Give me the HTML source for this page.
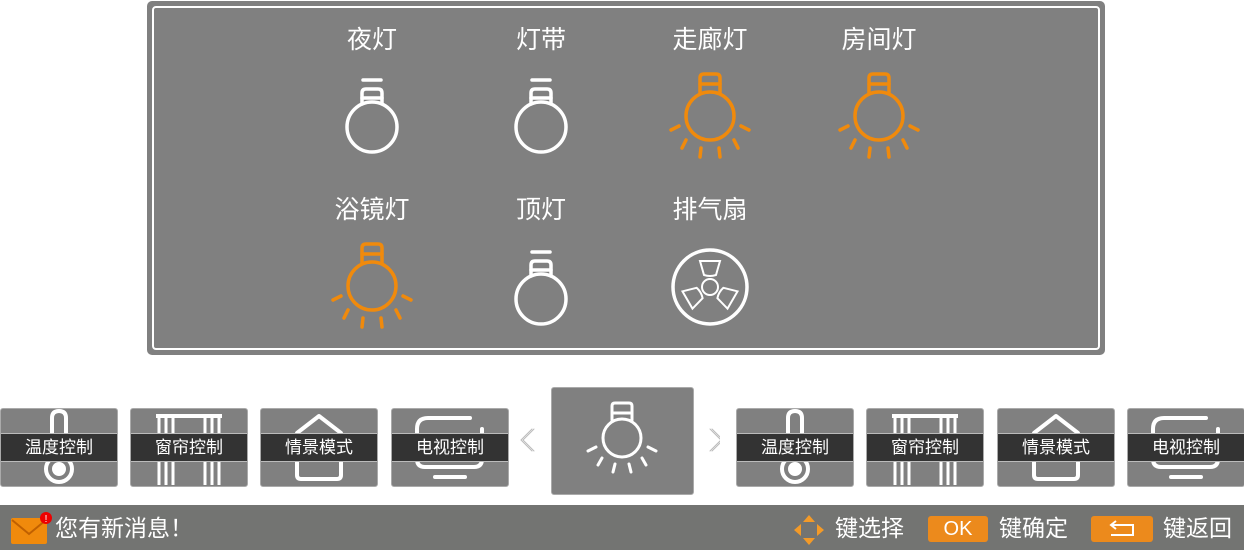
<!DOCTYPE html><html><head><meta charset="utf-8"><style>
body{margin:0;width:1244px;height:550px;background:#fff;position:relative;overflow:hidden;font-family:"Liberation Sans","Noto Sans CJK SC",sans-serif}
.panel{position:absolute;left:147px;top:1px;width:958px;height:354px;background:#808080;border-radius:5px}
.panel:after{content:"";position:absolute;left:5px;top:5px;right:5px;bottom:5px;border:2px solid #fff;border-radius:4px}
.lbl{position:absolute;color:#fff;font-size:25px;width:140px;text-align:center;line-height:30px}
.tile{position:absolute;top:408px;width:116px;height:77px;background:#808080;border:1px solid #aaa;border-radius:3px;overflow:hidden}
.band{position:absolute;left:0;right:0;top:24px;height:27px;background:#333;border-top:1px solid #bbb;border-bottom:1px solid #bbb;color:#fff;font-size:17px;text-align:center;line-height:27px}
.tile svg{position:absolute;left:0;top:0}
.foot{position:absolute;left:0;top:505px;width:1244px;height:45px;background:#737472;color:#fff;font-size:23px}
.btn{position:absolute;top:11px;height:26px;background:#ec8a1c;border-radius:3px;color:#fff;text-align:center;line-height:26px;font-size:20px}
</style></head><body>
<svg width="0" height="0" style="position:absolute"><defs>
<g id="wb" fill="none" stroke="#fff" stroke-width="3.5" stroke-linecap="round"><line x1="-9" y1="-47" x2="9" y2="-47"/><path d="M-10,-23 V-34 Q-10,-38 -6,-38 H6 Q10,-38 10,-34 V-23"/><line x1="-10" y1="-29" x2="10" y2="-29"/><circle cx="0" cy="0" r="25"/></g>
<g id="ob" fill="none" stroke="#f08a0c" stroke-width="3.5" stroke-linecap="round"><path d="M-10,-22 V-38 Q-10,-42 -6,-42 H6 Q10,-42 10,-38 V-22"/><line x1="-10" y1="-32" x2="10" y2="-32"/><circle cx="0" cy="0" r="24"/><line x1="-31" y1="10" x2="-39" y2="14"/><line x1="31" y1="10" x2="39" y2="14"/><line x1="-24" y1="24" x2="-28" y2="32"/><line x1="24" y1="24" x2="28" y2="32"/><line x1="-9" y1="32" x2="-10" y2="41"/><line x1="9" y1="32" x2="10" y2="41"/></g>
</defs></svg>
<div class="panel"></div>
<div class="lbl" style="left:302px;top:25px">夜灯</div>
<div class="lbl" style="left:471px;top:25px">灯带</div>
<div class="lbl" style="left:640px;top:25px">走廊灯</div>
<div class="lbl" style="left:809px;top:25px">房间灯</div>
<div class="lbl" style="left:302px;top:195px">浴镜灯</div>
<div class="lbl" style="left:471px;top:195px">顶灯</div>
<div class="lbl" style="left:640px;top:195px">排气扇</div>
<svg style="position:absolute;left:0;top:0" width="1244" height="360">
<use href="#wb" x="372" y="127"/><use href="#wb" x="541" y="127"/>
<use href="#ob" x="710" y="116"/><use href="#ob" x="879" y="116"/>
<use href="#ob" x="372" y="286"/><use href="#wb" x="541" y="299"/>
<g fill="none" stroke="#fff" transform="translate(710,287)"><circle r="37" stroke-width="3.5"/><circle r="8" stroke-width="2"/><path stroke-width="2" d="M-10,-26 L10,-26 L6,-12 Q0,-10 -6,-12 Z" /><path stroke-width="2" d="M-10,-26 L10,-26 L6,-12 Q0,-10 -6,-12 Z" transform="rotate(120)"/><path stroke-width="2" d="M-10,-26 L10,-26 L6,-12 Q0,-10 -6,-12 Z" transform="rotate(240)"/></g>
</svg>
<div class="tile" style="left:0"><svg width="117" height="78" fill="none" stroke="#fff" stroke-width="4"><path d="M51,50 V9 Q51,2 58,2 Q65,2 65,9 V50"/><circle cx="58" cy="60" r="13"/><circle cx="58" cy="60" r="5" fill="#fff"/></svg><div class="band">温度控制</div></div>
<div class="tile" style="left:130px"><svg width="117" height="78" stroke="#fff" stroke-width="3"><line x1="25" y1="7" x2="91" y2="7" stroke-width="4"/><line x1="28" y1="7" x2="28" y2="76"/><line x1="35" y1="7" x2="35" y2="76"/><line x1="42" y1="7" x2="42" y2="76"/><line x1="74" y1="7" x2="74" y2="76"/><line x1="81" y1="7" x2="81" y2="76"/><line x1="88" y1="7" x2="88" y2="76"/></svg><div class="band">窗帘控制</div></div>
<div class="tile" style="left:260px"><svg width="117" height="78" fill="none" stroke="#fff" stroke-width="4" stroke-linejoin="round"><path d="M36,24 L58,7 L80,24 V66 Q80,70 76,70 H40 Q36,70 36,66 Z"/></svg><div class="band">情景模式</div></div>
<div class="tile" style="left:391px"><svg width="117" height="78" fill="none" stroke="#fff" stroke-width="4" stroke-linecap="round"><path d="M78,9 H36 Q25,9 25,20 V50 Q25,58 33,58 H82 Q90,58 90,50 V20"/><line x1="43" y1="68" x2="73" y2="68"/></svg><div class="band">电视控制</div></div>
<div class="tile" style="left:736px"><svg width="117" height="78" fill="none" stroke="#fff" stroke-width="4"><path d="M51,50 V9 Q51,2 58,2 Q65,2 65,9 V50"/><circle cx="58" cy="60" r="13"/><circle cx="58" cy="60" r="5" fill="#fff"/></svg><div class="band">温度控制</div></div>
<div class="tile" style="left:866px"><svg width="117" height="78" stroke="#fff" stroke-width="3"><line x1="25" y1="7" x2="91" y2="7" stroke-width="4"/><line x1="28" y1="7" x2="28" y2="76"/><line x1="35" y1="7" x2="35" y2="76"/><line x1="42" y1="7" x2="42" y2="76"/><line x1="74" y1="7" x2="74" y2="76"/><line x1="81" y1="7" x2="81" y2="76"/><line x1="88" y1="7" x2="88" y2="76"/></svg><div class="band">窗帘控制</div></div>
<div class="tile" style="left:997px"><svg width="117" height="78" fill="none" stroke="#fff" stroke-width="4" stroke-linejoin="round"><path d="M36,24 L58,7 L80,24 V66 Q80,70 76,70 H40 Q36,70 36,66 Z"/></svg><div class="band">情景模式</div></div>
<div class="tile" style="left:1127px"><svg width="117" height="78" fill="none" stroke="#fff" stroke-width="4" stroke-linecap="round"><path d="M78,9 H36 Q25,9 25,20 V50 Q25,58 33,58 H82 Q90,58 90,50 V20"/><line x1="43" y1="68" x2="73" y2="68"/></svg><div class="band">电视控制</div></div>
<div style="position:absolute;left:551px;top:387px;width:141px;height:106px;background:#808080;border:1px solid #aaa;border-radius:3px"></div>
<svg style="position:absolute;left:520px;top:385px" width="200" height="115" fill="none" stroke="#fff" stroke-width="3" stroke-linecap="round">
<path d="M92,35 V21 Q92,18 95,18 H109 Q112,18 112,21 V35"/><line x1="92" y1="28" x2="112" y2="28"/><circle cx="102" cy="53" r="19"/>
<line x1="68" y1="66" x2="76" y2="62"/><line x1="128" y1="62" x2="136" y2="66"/><line x1="78" y1="80" x2="82" y2="73"/><line x1="122" y1="73" x2="126" y2="80"/><line x1="93" y1="87" x2="95" y2="79"/><line x1="109" y1="79" x2="111" y2="87"/>
<g stroke="#bbb" stroke-width="1" fill="none"><path d="M14,44 L3,55 L14,66 M12,44 L1,55 L12,66"/><path d="M190,44 L201,55 L190,66"/><path d="M192,44 L203,55 L192,66"/></g>
</svg>
<div class="foot">
<svg style="position:absolute;left:11px;top:7px" width="42" height="32"><rect x="0" y="6" width="36" height="26" rx="2" fill="#f08a0c"/><path d="M1,8 L18,22 L35,8" fill="none" stroke="#c06000" stroke-width="2"/><circle cx="35" cy="6" r="6" fill="#e00"/><text x="35" y="10" font-size="10" fill="#fff" text-anchor="middle" font-family="Liberation Sans">!</text></svg>
<div style="position:absolute;left:55px;top:8px;line-height:30px">您有新消息！</div>
<svg style="position:absolute;left:794px;top:10px" width="30" height="30"><path d="M15,0 L21,7 H9 Z M15,30 L21,23 H9 Z M0,15 L7,9 V21 Z M30,15 L23,9 V21 Z" fill="#f39a28"/></svg>
<div style="position:absolute;left:835px;top:8px;line-height:30px">键选择</div>
<div class="btn" style="left:928px;width:60px">OK</div>
<div style="position:absolute;left:999px;top:8px;line-height:30px">键确定</div>
<div class="btn" style="left:1091px;width:62px"><svg width="62" height="26" fill="none" stroke="#fff" stroke-width="2"><path d="M20,9 H42 V19 H20"/><path d="M25,5 L20,9 L25,13"/></svg></div>
<div style="position:absolute;left:1163px;top:8px;line-height:30px">键返回</div>
</div>
</body></html>
